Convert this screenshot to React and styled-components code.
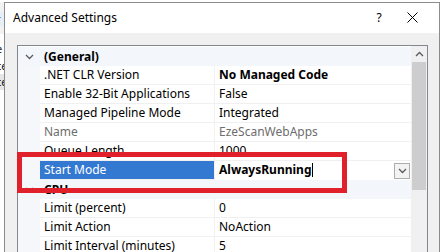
import React from "react";
import styled, { createGlobalStyle } from "styled-components";

const GlobalStyle = createGlobalStyle`
  html, body { margin: 0; padding: 0; background: #ffffff; overflow: hidden; }
  body { font-family: "Noto Sans", "Open Sans", Arial, sans-serif; font-size: 12px; color: #000; }
`;

const Screen = styled.div`
  position: relative;
  width: 442px;
  height: 252px;
  display: flex;
  overflow: hidden;
  background: #ffffff;
`;

const BackStrip = styled.div`
  width: 4px;
  flex: none;
  display: flex;
  flex-direction: column;
  overflow: hidden;
  font-size: 11px;
  background: #ffffff;
`;

const BackBit = styled.div`
  height: ${(p) => p.$h}px;
  flex: none;
  overflow: hidden;
  background: ${(p) => p.$bg || "#fff"};
  color: #222;
  line-height: ${(p) => p.$h}px;
  white-space: nowrap;
  text-indent: -4px;
`;

const Dialog = styled.div`
  flex: none;
  width: 434px;
  margin-top: 2px;
  display: flex;
  flex-direction: column;
  border: 1px solid #8c8c8c;
  border-bottom: none;
  background: #f0f0f0;
`;

const TitleBar = styled.div`
  height: 30px;
  background: #ffffff;
  display: flex;
  align-items: center;
  padding-left: 8px;
  padding-bottom: 1px;
  box-sizing: border-box;
`;

const Title = styled.div`
  flex: 1;
  font-size: 12px;
  color: #000;
`;

const TitleButton = styled.div`
  width: ${(p) => p.$w}px;
  height: 29px;
  display: flex;
  align-items: center;
  justify-content: center;
  font-size: 12px;
`;

const Body = styled.div`
  flex: 1;
  padding: 12px 11px 0 12px;
  display: flex;
  flex-direction: column;
`;

const Grid = styled.div`
  flex: 1;
  display: flex;
  border: 1px solid #828790;
  border-bottom: none;
  background: #ffffff;
`;

const Rows = styled.div`
  flex: 1;
  display: flex;
  flex-direction: column;
  padding-top: 1px;
  overflow: hidden;
`;

const Row = styled.div`
  height: 19px;
  flex: none;
  display: flex;
  background: ${(p) => (p.$category ? "#f3f6fb" : "#f5f7fb")};
`;

const Gutter = styled.div`
  width: 21px;
  flex: none;
  display: flex;
  align-items: center;
  justify-content: center;
  padding-left: 1px;
`;

const CategoryName = styled.div`
  flex: 1;
  font-weight: bold;
  padding-left: 4px;
  line-height: 19px;
`;

const Label = styled.div`
  width: 170px;
  flex: none;
  padding-left: 4px;
  line-height: 18px;
  border-right: 1px solid #f0f0f0;
  border-bottom: 1px solid #f0f0f0;
  background: ${(p) => (p.$selected ? "#3379d2" : "#ffffff")};
  color: ${(p) => (p.$selected ? "#ffffff" : p.$disabled ? "#6d6d6d" : "#000")};
  white-space: nowrap;
  overflow: hidden;
`;

const Value = styled.div`
  flex: 1;
  display: flex;
  align-items: center;
  padding-left: 4px;
  line-height: 18px;
  border-bottom: 1px solid ${(p) => (p.$editing ? "#ffffff" : "#f0f0f0")};
  background: #ffffff;
  color: ${(p) => (p.$disabled ? "#6d6d6d" : "#000")};
  font-weight: ${(p) => (p.$bold ? "bold" : "normal")};
  white-space: nowrap;
  overflow: hidden;
`;

const ValueText = styled.span`
  flex: 1;
  display: flex;
  align-items: center;
`;

const Caret = styled.span`
  display: inline-block;
  width: 1px;
  height: 14px;
  background: #000;
  margin-left: 1px;
`;

const DropButton = styled.div`
  width: 16px;
  height: 16px;
  flex: none;
  margin-right: 1px;
  margin-top: 1px;
  border: 1px solid #adadad;
  background: #f3f3f3;
  box-sizing: border-box;
  display: flex;
  align-items: center;
  justify-content: center;
`;

const Scrollbar = styled.div`
  width: 16px;
  flex: none;
  display: flex;
  flex-direction: column;
  background: #f0f0f0;
`;

const ScrollArrow = styled.div`
  height: 16px;
  display: flex;
  align-items: center;
  justify-content: center;
`;

const Thumb = styled.div`
  height: 128px;
  margin: 0 1px;
  background: #cdcdcd;
`;

const Highlight = styled.div`
  position: absolute;
  left: 17px;
  top: 152px;
  width: 330px;
  height: 41px;
  box-sizing: border-box;
  border: 5px solid #e0202b;
  pointer-events: none;
`;

const Chevron = ({ up }) => (
  <svg width="9" height="6" viewBox="0 0 9 6">
    <path
      d={up ? "M1 5 L4.5 1.5 L8 5" : "M1 1 L4.5 4.5 L8 1"}
      fill="none"
      stroke="#5a5a5a"
      strokeWidth="1.3"
    />
  </svg>
);

const CloseIcon = () => (
  <svg width="11" height="11" viewBox="0 0 11 11">
    <path d="M0.5 0.5 L10.5 10.5 M10.5 0.5 L0.5 10.5" stroke="#000" strokeWidth="1" />
  </svg>
);

const rows = [
  { cat: "(General)" },
  { label: ".NET CLR Version", value: "No Managed Code", bold: true },
  { label: "Enable 32-Bit Applications", value: "False" },
  { label: "Managed Pipeline Mode", value: "Integrated" },
  { label: "Name", value: "EzeScanWebApps", disabled: true },
  { label: "Queue Length", value: "1000" },
  { label: "Start Mode", value: "AlwaysRunning", bold: true, selected: true },
  { cat: "CPU" },
  { label: "Limit (percent)", value: "0" },
  { label: "Limit Action", value: "NoAction" },
  { label: "Limit Interval (minutes)", value: "5" },
];

export default function App() {
  return (
    <>
      <GlobalStyle />
      <Screen>
        <BackStrip>
          <BackBit $h={2} />
          <BackBit $h={10} $bg="#f2f2f2" />
          <BackBit $h={14} $bg="#e6eef6">r</BackBit>
          <BackBit $h={8} $bg="#f2f2f2" />
          <BackBit $h={6} />
          <BackBit $h={18}>e</BackBit>
          <BackBit $h={16}>ce</BackBit>
          <BackBit $h={16} $bg="#e6e6e6">ce</BackBit>
          <BackBit $h={162} />
        </BackStrip>
        <Dialog>
          <TitleBar>
            <Title>Advanced Settings</Title>
            <TitleButton $w={20}>?</TitleButton>
            <TitleButton $w={46}>
              <CloseIcon />
            </TitleButton>
            <TitleButton $w={4} />
          </TitleBar>
          <Body>
            <Grid>
              <Rows>
                {rows.map((r, i) =>
                  r.cat ? (
                    <Row key={i} $category>
                      <Gutter>
                        <Chevron />
                      </Gutter>
                      <CategoryName>{r.cat}</CategoryName>
                    </Row>
                  ) : (
                    <Row key={i}>
                      <Gutter />
                      <Label $selected={r.selected} $disabled={r.disabled}>
                        {r.label}
                      </Label>
                      <Value $bold={r.bold} $disabled={r.disabled} $editing={r.selected}>
                        <ValueText>
                          {r.value}
                          {r.selected && <Caret />}
                        </ValueText>
                        {r.selected && (
                          <DropButton>
                            <Chevron />
                          </DropButton>
                        )}
                      </Value>
                    </Row>
                  )
                )}
              </Rows>
              <Scrollbar>
                <ScrollArrow>
                  <Chevron up />
                </ScrollArrow>
                <Thumb />
              </Scrollbar>
            </Grid>
          </Body>
        </Dialog>
        <Highlight />
      </Screen>
    </>
  );
}
